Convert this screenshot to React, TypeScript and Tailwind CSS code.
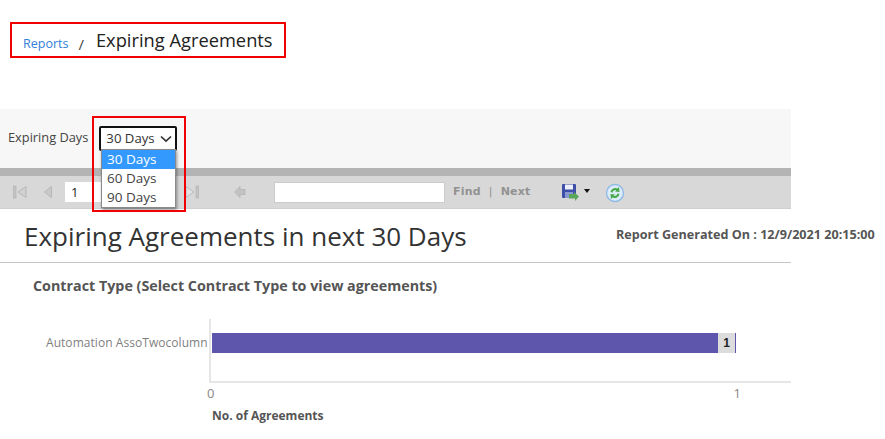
const sans = 'font-["Open_Sans",sans-serif]'

function FirstIcon() {
  return (
    <svg width="14" height="14" viewBox="0 0 14 14">
      <rect x="0.5" y="1" width="2.5" height="12" fill="#c4c4c4" stroke="#b0b0b0" strokeWidth="0.6" />
      <path d="M13 1.5 L5 7 L13 12.5 Z" fill="#d0d0d0" stroke="#b0b0b0" strokeWidth="0.8" />
    </svg>
  )
}

function PrevIcon() {
  return (
    <svg width="10" height="14" viewBox="0 0 10 14">
      <path d="M8.5 1.5 L1.5 7 L8.5 12.5 Z" fill="#c8c8c8" stroke="#b0b0b0" strokeWidth="0.8" />
    </svg>
  )
}

function LastIcon() {
  return (
    <svg width="14" height="14" viewBox="0 0 14 14">
      <rect x="11" y="1" width="2.5" height="12" fill="#c4c4c4" stroke="#b0b0b0" strokeWidth="0.6" />
      <path d="M1 1.5 L9 7 L1 12.5 Z" fill="#e2e2e2" stroke="#b0b0b0" strokeWidth="0.8" />
    </svg>
  )
}

function BackIcon() {
  return (
    <svg width="14" height="14" viewBox="0 0 14 14">
      <path d="M7 1.5 L1.5 7 L7 12.5 V9.5 H12 V4.5 H7 Z" fill="#c2c2c2" stroke="#b0b0b0" strokeWidth="0.7" />
    </svg>
  )
}

function SaveIcon() {
  return (
    <svg width="20" height="20" viewBox="0 0 20 20">
      <rect x="1" y="1" width="14" height="14" rx="1" fill="#3d4fa8" />
      <rect x="4" y="1.5" width="8" height="5" fill="#eef0f8" />
      <rect x="4" y="9" width="8" height="6" fill="#8b97d0" />
      <path d="M8 11 L13 11 L13 9 L18 13.5 L14 18 L14 15.5 L8 15.5 Z" fill="#5aa65a" />
    </svg>
  )
}

function RefreshIcon() {
  return (
    <svg width="20" height="20" viewBox="0 0 20 20">
      <circle cx="10" cy="10" r="8.5" fill="#dcebf8" stroke="#8fbbe6" strokeWidth="1.4" />
      <path d="M5.5 9 A5 5 0 0 1 12.5 5.5 L14 4 L14.5 9 L10 8.5 L11.4 7.2 A3 3 0 0 0 7.5 9.5 Z" fill="#46a846" />
      <path d="M14.5 11 A5 5 0 0 1 7.5 14.5 L6 16 L5.5 11 L10 11.5 L8.6 12.8 A3 3 0 0 0 12.5 10.5 Z" fill="#46a846" />
    </svg>
  )
}

function Chevron() {
  return (
    <svg width="12" height="8" viewBox="0 0 12 8" fill="none">
      <path d="M1 1.5 L6 6.2 L11 1.5" stroke="#333" strokeWidth="1.7" />
    </svg>
  )
}

const DAYS = ['30 Days', '60 Days', '90 Days']

function Toolbar() {
  return (
    <div className="flex h-[33px] w-[791px] items-center border-b border-[#cfcfcf] bg-[#d8d8d8] pl-[13px]">
      <FirstIcon />
      <span className="ml-[16px] flex"><PrevIcon /></span>
      <input
        readOnly
        value="1"
        className={`ml-[12px] h-[20px] w-[42px] bg-white pl-[6px] text-[13px] text-[#222] outline-none ${sans}`}
      />
      <span className="ml-[78px] flex"><LastIcon /></span>
      <span className="ml-[34px] flex"><BackIcon /></span>
      <div className="ml-[27px] h-[21px] w-[171px] border border-[#cccccc] bg-white" />
      <div className={'ml-[8px] flex items-center text-[11px] font-semibold tracking-[0.2px] text-[#929292] font-["DejaVu_Sans",sans-serif]'}>
        <span>Find</span>
        <span className="mx-[8px] font-normal">|</span>
        <span>Next</span>
      </div>
      <span className="ml-[30px] mt-[2px] flex"><SaveIcon /></span>
      <span className="ml-[3px] mb-[2px] h-0 w-0 border-x-[3px] border-t-[4px] border-x-transparent border-t-[#111]" />
      <span className="ml-[15px] mt-[2px] flex"><RefreshIcon /></span>
    </div>
  )
}

function Chart() {
  return (
    <div className="ml-[46px] mt-[23px] flex h-[64px] w-[745px] items-center">
      <span className={'-mt-[16px] w-[163px] text-[12px] tracking-[0.05px] whitespace-nowrap text-[#7f7f7f] font-["Open_Sans",sans-serif]'}>
        Automation AssoTwocolumn
      </span>
      <div className="flex h-full flex-1 items-center border-b-2 border-l-2 border-[#e6e6e6]">
        <div className="-mt-[15px] ml-[1px] flex h-[20px] w-[524px] bg-[#5e56ad]">
          <div className="ml-auto mr-[1px] flex h-full w-[17px] items-center justify-center bg-[#dcdcdc] text-[12px] font-bold text-[#222] font-['Liberation_Sans']">
            1
          </div>
        </div>
      </div>
    </div>
  )
}

export default function App() {
  return (
    <div className={`relative h-[439px] w-[885px] overflow-hidden bg-white ${sans}`}>
      {/* breadcrumb */}
      <div className="ml-[10px] mt-[22px] flex h-[36px] w-[276px] items-center border-2 border-[#f00000] pl-[11px]">
        <span className="mt-[8px] text-[12.5px] text-[#2f80d8]">Reports</span>
        <span className="ml-[10px] mt-[8px] text-[15px] text-[#444]">/</span>
        <span className="ml-[12px] text-[18.3px] text-[#222]">Expiring Agreements</span>
      </div>

      {/* parameter bar */}
      <div className="mt-[51px] flex h-[59px] w-[791px] items-start bg-[#f7f7f7] pl-[8px] pt-[19px]">
        <span className="text-[12.8px] leading-[18px] text-[#444]">Expiring Days</span>
        <div className="ml-[11px] -mt-[2px] flex h-[25px] w-[78px] items-center justify-between rounded-[2px] border-2 border-[#111] bg-white pl-[5px] pr-[3px] text-[13.2px] text-[#333]">
          <span>30 Days</span>
          <Chevron />
        </div>
      </div>
      <div className="h-[8px] w-[791px] bg-[#b4b4b4]" />
      <Toolbar />

      {/* report header */}
      <div className="flex h-[53px] items-start pl-[24px] pt-[9px]">
        <h1 className="w-[592px] text-[26px] leading-[36px] text-[#333]">Expiring Agreements in next 30 Days</h1>
        <span className="mt-[8px] text-[12.6px] font-bold whitespace-nowrap text-[#555]">
          Report Generated On : 12/9/2021 20:15:00
        </span>
      </div>
      <div className="h-px w-[791px] bg-[#c4c4c4]" />

      <div className="ml-[33px] mt-[13px] text-[14.3px] leading-[20px] font-bold text-[#555]">
        Contract Type (Select Contract Type to view agreements)
      </div>

      <Chart />

      <div className="ml-[207px] mt-[1px] flex w-[534px] justify-between text-[13px] leading-[18px] text-[#888]">
        <span>0</span>
        <span>1</span>
      </div>
      <div className="ml-[212px] mt-[5px] text-[12px] font-bold text-[#555]">No. of Agreements</div>

      {/* open select menu, lies over the toolbar */}
      <div className="absolute left-[101px] top-[149px] w-[75px] border border-[#8a8a8a] bg-white text-[13.5px] leading-[19px] text-[#444] shadow-[1px_2px_3px_rgba(0,0,0,0.4)]">
        {DAYS.map((d, i) => (
          <div key={d} className={i === 0 ? 'bg-[#3399ff] pl-[5px] text-white' : 'pl-[5px]'}>
            {d}
          </div>
        ))}
      </div>

      {/* red annotation round the select */}
      <div className="absolute left-[92px] top-[116px] h-[96px] w-[94px] border-2 border-[#f00000]" />
    </div>
  )
}
